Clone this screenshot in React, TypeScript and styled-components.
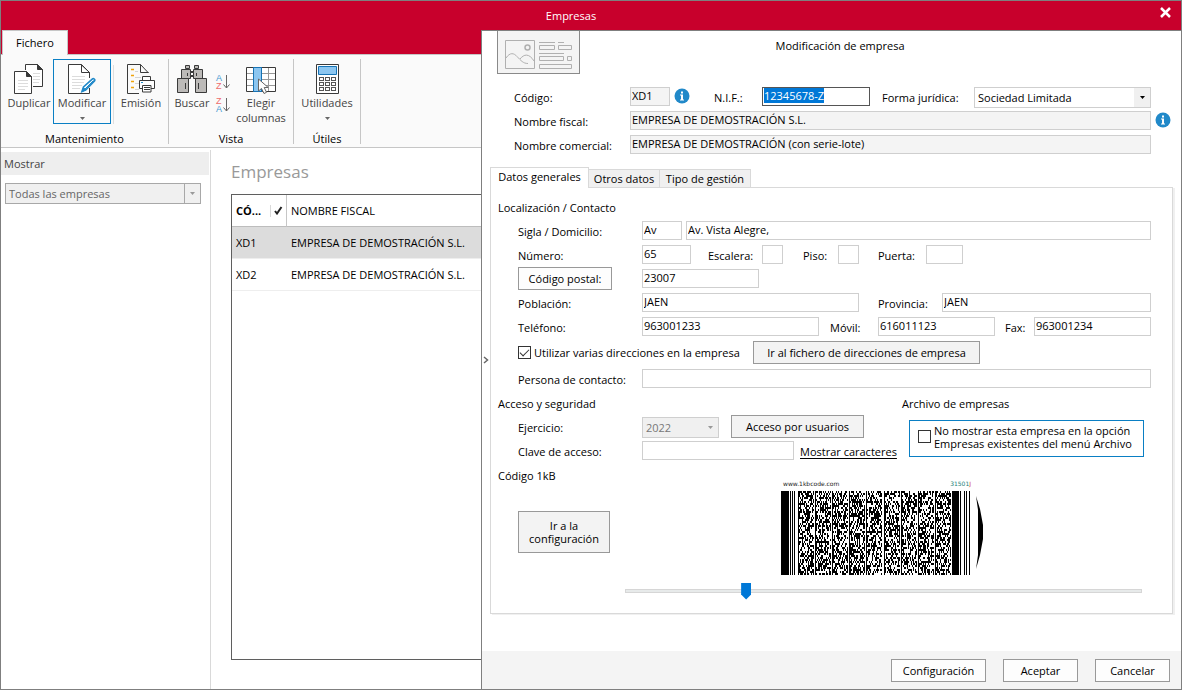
import React, { useEffect, useRef } from "react";
import styled, { createGlobalStyle, css } from "styled-components";

const color = {
  brand: "#c8002c",
  frame: "#7f7f7f",
  ribbon: "#fafafa",
  line: "#c6c6c6",
  field: "#cfcfcf",
  soft: "#d9d9d9",
  readOnly: "#f4f4f4",
  accent: "#0a7fc4",
  info: "#2189c9",
  select: "#0078d7",
};

const GlobalStyle = createGlobalStyle`
  *, *::before, *::after { box-sizing: border-box; }
  body { margin: 0; background: #fff; }
  body, button, input, select {
    font-family: "Open Sans", "Noto Sans", sans-serif;
    font-size: 11px;
    line-height: 15px;
    color: #000;
  }
  button, input, select { margin: 0; border-radius: 0; }
`;

/* ---------- window ---------- */

const Window = styled.div`
  display: flex;
  flex-direction: column;
  min-height: 100vh;
  border: 1px solid ${color.frame};
`;

const TitleBar = styled.header`
  display: flex;
  height: 29px;
  background: ${color.brand};
  color: #fff;
`;

const WindowTitle = styled.h1`
  flex: 1;
  margin: 0;
  font-size: 11px;
  font-weight: 400;
  line-height: 29px;
  text-align: center;
`;

const CloseButton = styled.button`
  display: flex;
  align-items: flex-start;
  justify-content: flex-end;
  width: 40px;
  padding: 6px 10px 0 0;
  border: 0;
  background: none;
`;

const Workspace = styled.div`
  display: flex;
  flex: 1;
`;

const Browser = styled.div`
  display: flex;
  flex-direction: column;
  flex: 0 1 480px;
  min-width: 0;
  overflow: hidden;
`;

/* ---------- ribbon ---------- */

const RibbonTabs = styled.nav`
  display: flex;
  height: 24px;
  padding-left: 1px;
  background: ${color.brand};
`;

const RibbonTab = styled.button`
  width: 66px;
  height: 25px;
  padding: 0 0 2px;
  border: 1px solid ${color.line};
  border-bottom: 0;
  background: ${color.ribbon};
  position: relative;
`;

const RibbonBar = styled.div`
  display: flex;
  height: 94px;
  padding-top: 4px;
  border-top: 1px solid ${color.line};
  border-bottom: 1px solid ${color.line};
  background: ${color.ribbon};
`;

const RibbonGroup = styled.section<{ $width: number }>`
  display: flex;
  flex-direction: column;
  flex: none;
  width: ${(p) => p.$width}px;
  height: 85px;
  border-right: 1px solid ${color.line};
`;

const RibbonItems = styled.div<{ $inset?: number }>`
  display: flex;
  flex: none;
  height: 72px;
  padding-left: ${(p) => p.$inset ?? 0}px;
`;

const GroupName = styled.h2`
  margin: 0;
  font-size: 11px;
  font-weight: 400;
  line-height: 16px;
  text-align: center;
`;

const RibbonButton = styled.button<{ $width: number; $active?: boolean }>`
  display: flex;
  flex-direction: column;
  align-items: center;
  flex: none;
  width: ${(p) => p.$width}px;
  height: 65px;
  padding: 4px 0 0;
  border: 1px solid ${(p) => (p.$active ? color.accent : "transparent")};
  background: none;
  color: #444;
  white-space: nowrap;

  svg { flex: none; }
  span { margin-top: 1px; }
  span + svg { margin-top: 7px; }
`;

const RibbonRule = styled.div`
  width: 1px;
  height: 59px;
  margin: 6px 0 0 2px;
  background: #dedede;
`;

const SortStack = styled.div`
  display: flex;
  flex-direction: column;
  gap: 7px;
  padding-top: 15px;
`;

const SortButton = styled.button`
  display: block;
  width: 16px;
  height: 16px;
  padding: 0;
  border: 0;
  background: none;

  svg { display: block; }
`;

/* ---------- left side ---------- */

const Lower = styled.div`
  display: flex;
  flex: 1;
`;

const Sidebar = styled.aside`
  flex: none;
  width: 210px;
  margin-top: 2px;
  padding-top: 2px;
  border-right: 1px solid ${color.soft};
`;

const SidebarTitle = styled.h2`
  width: 208px;
  margin: 0 0 8px;
  padding-left: 3px;
  background: #eee;
  color: #444;
  font-size: 11px;
  font-weight: 400;
  line-height: 23px;
`;

const ListArea = styled.main`
  display: flex;
  flex-direction: column;
  flex: 1;
  min-width: 0;
  padding: 12px 0 29px 20px;
`;

const ListTitle = styled.h2`
  margin: 0 0 10px;
  color: #999;
  font-size: 17px;
  font-weight: 400;
  line-height: 24px;
`;

const TableFrame = styled.div`
  flex: 1;
  overflow: hidden;
  border: 1px solid #5f5f5f;
  border-right: 0;
`;

const Table = styled.table`
  width: 100%;
  table-layout: fixed;
  border-collapse: separate;
  border-spacing: 0;
  white-space: nowrap;

  th, td {
    height: 32px;
    padding: 0 0 0 4px;
    border-bottom: 1px solid #eee;
    text-align: left;
    font-weight: 400;
  }
  th { border-bottom-color: #bdbdbd; }
  th:first-child { font-weight: 700; }
  th:nth-child(2) { padding: 0; border-right: 1px solid ${color.line}; }
`;

const TickHead = styled.span`
  display: flex;
  align-items: center;
  justify-content: center;
  height: 12px;
  border-left: 1px solid ${color.soft};
`;

const Row = styled.tr<{ $selected?: boolean }>`
  background: ${(p) => (p.$selected ? "#dcdcdc" : "#fff")};
`;

/* ---------- dialog ---------- */

const Dialog = styled.section`
  display: grid;
  grid-template-columns: 8px minmax(0, 1fr);
  grid-template-rows: 1fr auto;
  flex: 1;
  min-width: 0;
  border-top: 1px solid ${color.frame};
  border-left: 1px solid ${color.frame};
  background: #fff;
`;

const Collapse = styled.button`
  grid-area: 1 / 1 / 3 / 2;
  align-self: center;
  z-index: 1;
  padding: 0;
  border: 0;
  background: none;

  svg { display: block; }
`;

const DialogBody = styled.div`
  grid-area: 1 / 2;
  min-width: 0;
`;

const DialogHead = styled.div`
  display: flex;
  padding-left: 7px;
`;

const LayoutButton = styled.button`
  width: 83px;
  height: 43px;
  padding: 0;
  border: 1px solid #8a8a8a;
  border-top: 0;
  background: ${color.readOnly};

  svg { display: block; margin: 0 auto; }
`;

const DialogTitle = styled.h2`
  flex: 1;
  margin: 0 81px 0 0;
  font-size: 11px;
  font-weight: 400;
  line-height: 30px;
  text-align: center;
`;

const IdentityForm = styled.div`
  padding: 13px 0 8px 24px;
`;

const Line = styled.div<{ $tall?: boolean }>`
  display: flex;
  align-items: center;
  height: ${(p) => (p.$tall ? 23 : 19)}px;
  margin-bottom: 5px;
`;

const Label = styled.label<{ $width: number; $gap?: number }>`
  flex: none;
  width: ${(p) => p.$width}px;
  margin-left: ${(p) => p.$gap ?? 0}px;
  padding-top: 2px;
  white-space: nowrap;
`;

const TextBox = styled.input<{ $width?: number; $grow?: boolean; $strong?: boolean; $gap?: number }>`
  flex: ${(p) => (p.$width ? `${p.$grow ? p.$width : 0} 1 ${p.$width}px` : "1 1 0")};
  width: ${(p) => p.$width ?? 0}px;
  min-width: 0;
  height: 19px;
  margin-left: ${(p) => p.$gap ?? 0}px;
  padding: 0 1px 2px;
  border: 1px solid ${(p) => (p.$strong ? "#555" : color.field)};
  background: ${(p) => (p.readOnly ? color.readOnly : "#fff")};
  outline: 0;

  &::selection { background: ${color.select}; color: #fff; }
`;

const SideSlot = styled.div`
  flex: none;
  width: 30px;
  padding-left: 4px;
`;

const InfoButton = styled.button<{ $gap?: number }>`
  display: block;
  flex: none;
  width: 16px;
  height: 18px;
  margin-left: ${(p) => p.$gap ?? 0}px;
  padding: 0 0 2px;
  border: 0;
  background: none;

  svg { display: block; }
`;

const DropFrame = styled.div<{ $width?: number }>`
  display: grid;
  align-self: flex-start;
  flex: ${(p) => (p.$width ? `0 0 ${p.$width}px` : "1 1 0")};
  min-width: 0;
  height: 21px;

  > * { grid-area: 1 / 1; }
`;

const dropTones = {
  plain: css`border-color: ${color.field}; background: #fff; color: #000;`,
  muted: css`border-color: ${color.field}; background: #f0f0f0; color: #777;`,
  framed: css`border-color: #a8a8a8; background: #f0f0f0; color: #666;`,
};

type Tone = keyof typeof dropTones;

const Drop = styled.select<{ $tone: Tone }>`
  appearance: none;
  width: 100%;
  height: 21px;
  padding: 0 0 0 3px;
  border: 1px solid;
  outline: 0;
  ${(p) => dropTones[p.$tone]}

  &:disabled { opacity: 1; }
`;

const DropArrow = styled.span<{ $tone: Tone }>`
  display: flex;
  align-items: center;
  justify-content: center;
  justify-self: end;
  width: 16px;
  height: 19px;
  margin: 1px 1px 0 0;
  background: #f0f0f0;
  border-left: 1px solid ${(p) => (p.$tone === "framed" ? "#a8a8a8" : "#f0f0f0")};
  pointer-events: none;
`;

const SidebarFilter = styled.div`
  display: flex;
  width: 200px;
  padding-left: 4px;
`;

const Tabs = styled.div`
  display: flex;
  align-items: flex-end;
  height: 20px;
`;

const Tab = styled.button<{ $width: number; $active?: boolean }>`
  width: ${(p) => p.$width}px;
  height: ${(p) => (p.$active ? 21 : 18)}px;
  margin-bottom: ${(p) => (p.$active ? -1 : 0)}px;
  padding: ${(p) => (p.$active ? "0 0 3px" : "0")};
  border: 1px solid ${color.soft};
  border-bottom: 0;
  border-left-width: ${(p) => (p.$active ? 1 : 0)}px;
  background: ${(p) => (p.$active ? "#fff" : "#f0f0f0")};
  white-space: nowrap;
  z-index: ${(p) => (p.$active ? 1 : 0)};
`;

const Panel = styled.div`
  margin-right: 8px;
  padding: 9px 21px 14px 7px;
  border: 1px solid ${color.soft};
  box-shadow: 2px 1px 0 #f0f0f0;
`;

const SectionTitle = styled.h3`
  height: 24px;
  margin: 0;
  font-size: 11px;
  font-weight: 400;
  line-height: 22px;
`;

const Indent = styled.div`
  padding-left: 20px;
`;

const PushButton = styled.button<{ $width: number; $height?: number; $light?: boolean; $gap?: number }>`
  flex: none;
  width: ${(p) => p.$width}px;
  height: ${(p) => p.$height ?? 23}px;
  margin-left: ${(p) => p.$gap ?? 0}px;
  padding: 0;
  border: 1px solid #999;
  background: ${(p) => (p.$light ? "#fdfdfd" : "#f3f3f3")};
  line-height: 13px;
`;

const PostalSlot = styled.div`
  display: flex;
  flex: none;
  width: 124px;
`;

const Tick = styled.input`
  appearance: none;
  display: grid;
  place-items: center;
  flex: none;
  width: 13px;
  height: 13px;
  border: 1px solid #333;
  background: #fff;

  &:checked::before {
    content: "";
    width: 9px;
    height: 5px;
    margin-bottom: 3px;
    border: solid #333;
    border-width: 0 0 1px 1px;
    transform: rotate(-45deg);
  }
`;

const TickLabel = styled.label<{ $width?: number }>`
  display: flex;
  align-items: center;
  gap: 3px;
  flex: none;
  width: ${(p) => (p.$width ? `${p.$width}px` : "auto")};
  line-height: 13px;
  white-space: nowrap;
`;

const Columns = styled.div`
  display: flex;
  height: 72px;
`;

const AccessColumn = styled.div`
  flex: 1;
  min-width: 0;
`;

const ArchiveColumn = styled.div`
  flex: none;
  width: 249px;
`;

const ArchiveBox = styled.div`
  display: flex;
  align-items: center;
  height: 37px;
  margin: 3px 7px 0;
  padding: 0 0 4px 8px;
  border: 1px solid ${color.accent};
`;

const RevealLink = styled.a`
  margin-left: 6px;
  padding-top: 2px;
  color: #000;
  text-underline-offset: 2px;
`;

const CodeSection = styled.div`
  display: flex;
`;

const CodeActions = styled.div`
  flex: none;
  width: 127px;

  ${PushButton} { margin: 22px 0 0 20px; }
`;

const CodePreview = styled.div`
  display: flex;
  flex-direction: column;
  align-items: center;
  flex: 1;
  margin-right: 9px;
  padding-top: 12px;
`;

const CodeFigure = styled.figure`
  width: 205px;
  margin: 0;
  padding-right: 2px;

  svg { display: block; }
`;

const CodeCaption = styled.figcaption`
  display: flex;
  justify-content: space-between;
  height: 14px;
  padding: 0 13px 0 2px;
  color: #222;
  font-family: "DejaVu Sans", sans-serif;
  font-size: 6px;
  line-height: 14px;

  span { color: #1d7f78; }
  em { color: #d0342c; font-style: normal; }
`;

const Slider = styled.input`
  appearance: none;
  width: 100%;
  height: 17px;
  margin: 7px 0 0;
  background: none;
  outline: 0;

  &::-webkit-slider-runnable-track {
    height: 4px;
    border: 1px solid #d6d6d6;
    background: #e7eaea;
  }
  &::-webkit-slider-thumb {
    appearance: none;
    width: 10px;
    height: 17px;
    margin-top: -7px;
    background: ${color.select};
    clip-path: polygon(0 0, 100% 0, 100% 70%, 50% 100%, 0 70%);
  }
`;

const Footer = styled.footer`
  grid-area: 2 / 1 / 3 / 3;
  display: flex;
  justify-content: flex-end;
  gap: 17px;
  height: 38px;
  padding: 8px 11px 0 0;
  background: #f4f4f4;
`;

/* ---------- drawings ---------- */

const Arrow = ({ fill = "#666" }: { fill?: string }) => (
  <svg width="5" height="3" viewBox="0 0 5 3" aria-hidden="true">
    <path d="M0 0h5L2.5 3z" fill={fill} />
  </svg>
);

const DuplicateIcon = () => (
  <svg width="30" height="30" viewBox="0 0 30 30" fill="none" stroke="#3a3a3a">
    <path d="M11.5 6V.5h12l5 5v17H19" fill="#fff" />
    <path d="M23.5.5v5h5z" fill="#3a3a3a" />
    <path d="M19 9.5h7M19 12.5h7M19 15.5h7M19 18.5h6" stroke="#dcdcdc" />
    <path d="M.5 7.5h12l5 5v17H.5z" fill="#fff" />
    <path d="M12.5 7.5v5h5z" fill="#3a3a3a" />
    <path d="M4 16.5h10M4 19.5h10M4 22.5h10M4 25.5h7" stroke="#dcdcdc" />
  </svg>
);

const EditIcon = () => (
  <svg width="28" height="30" viewBox="0 0 28 30" fill="none" stroke="#3a3a3a">
    <path d="M21.5 14V8.5l-8-8H.5v29h21V24" fill="#fff" />
    <path d="M13.5.5v8h8M13.5 1l8 7.5" />
    <path d="M4 12.5h13M4 15.5h13M4 18.5h12M4 21.5h10M4 24.5h8" stroke="#dcdcdc" />
    <path d="M14 27.5l1.5-4.5 9-8.2c1-.9 3 .9 2 2.1l-8.6 9z" fill="#fff" stroke="#2189c9" strokeWidth="1.6" />
    <path d="M14 27.5l1.5-4 2.3 2.5zM17 25l8.500-8.500" stroke="#2189c9" fill="#2189c9" />
  </svg>
);

const PrintIcon = () => (
  <svg width="29" height="30" viewBox="0 0 29 30" fill="none" stroke="#3a3a3a">
    <path d="M13.5.5H.5v29H12M13.5.5l8 8.5" />
    <path d="M13.500.5v8h8" />
    <path d="M4 5.500h3M4 11.5h3M4 17.5h3M4 23.5h3" stroke="#f0a30a" strokeWidth="1.5" />
    <path d="M8 7.5h3M8 13.5h6M8 19.5h4M8 25.5h4" stroke="#d4d4d4" />
    <path d="M15.5 16.5v-4h8v4" fill="#fff" />
    <path d="M12.5 16.5h15v8h-15z" fill="#fff" />
    <path d="M15.5 21.5H24V28h-8.500zM17 23.5h6M17 25.5h6" fill="#fff" />
    <path d="M14 18.5h2" stroke="#2189c9" />
  </svg>
);

const SearchIcon = () => (
  <svg width="30" height="30" viewBox="0 0 30 30" fill="#bcbab8" stroke="#3a3a3a">
    <path d="M8.5 1.5h4v3h-4zM17.5 1.5h4v3h-4zM12.5 7.5h5v5h-5z" />
    <path d="M4.5 5.500h9v9h-9zM16.5 5.5h9v9h-9z" />
    <path d="M13.5 8.500h3v3h-3z" fill="#fff" />
    <path d="M.5 14.5h11v14H.5zM18.5 14.5h11v14h-11z" />
    <path d="M10.5 9v3M19.5 9v3M8.5 19v6M21.5 19v6" />
  </svg>
);

const SortIcon = ({ letters }: { letters: [string, string] }) => (
  <svg width="16" height="16" viewBox="0 0 16 16" fontFamily="Liberation Sans, sans-serif" fontSize="9">
    {letters.map((letter, i) => (
      <text key={letter} x="1" y={7 + i * 8} fill={letter === "A" ? "#3e97d1" : "#ee6a6a"}>
        {letter}
      </text>
    ))}
    <path d="M11.5 1v13M8.5 10.5l3 3.5 3-3.5" fill="none" stroke="#666" />
  </svg>
);

const ColumnsIcon = () => (
  <svg width="30" height="30" viewBox="0 0 30 30" fill="none">
    <path d="M.5 3.5h29v24H.5z" fill="#fff" />
    <path d="M0 9.5h30M0 15.5h30M0 21.5h30M15.5 3v24M22.5 3v24" stroke="#999" />
    <path d="M.5 3.5h29v24H.5z" stroke="#3a3a3a" />
    <path d="M7.5 3.5h8v24h-8z" fill="#8cc6f0" stroke="#1673b5" />
    <path d="M12.5 15v12l3-2.5 2.5 5 2.5-1.2-2.3-4.8h4z" fill="#fff" stroke="#666" />
  </svg>
);

const CalculatorIcon = () => (
  <svg width="23" height="30" viewBox="0 0 23 30" fill="none">
    <path d="M.5.5h22v29H.5z" fill="#fff" stroke="#3a3a3a" />
    <path d="M2.5 2.5h18v8h-18z" fill="#8cc6f0" stroke="#1673b5" />
    {[13.5, 18.5, 23.5].map((y) =>
      [3.5, 9.5, 15.5].map((x) => <rect key={`${x}-${y}`} x={x} y={y} width="4" height="3" stroke="#555" />)
    )}
  </svg>
);

const LayoutIcon = () => (
  <svg width="67" height="36" viewBox="0 0 67 36" fill="none" stroke="#b0b0b0">
    <path d="M.5 6.5h29v28H.5z" />
    <circle cx="22.5" cy="13.5" r="2.5" strokeWidth="1.5" />
    <path d="M1 24c4-6 8-5 11-1.5 4 4 6 7 11 7M15 25c4-5 9-6 14 2" />
    <path d="M34 8.5h16M53 8.5h6M34.5 11.5h15v4h-15zM53.5 11.5h13v4h-13zM34 19.5h25M34.5 22.5h24v4h-24zM62.5 22.5h4v4h-4zM34.5 30.5h32v4h-32z" />
  </svg>
);

const InfoIcon = () => (
  <svg width="16" height="16" viewBox="0 0 16 16">
    <circle cx="8" cy="8" r="7.5" fill={color.info} />
    <path d="M7 3.5h2v2H7zM6 6.5h3v5h1v1H6v-1h1v-4H6z" fill="#fff" />
  </svg>
);

/* Seeded generator, so that the code keeps one fixed pattern. */
const noise = (seed: number) => () => {
  seed = (seed + 0x6d2b79f5) | 0;
  let t = Math.imul(seed ^ (seed >>> 15), 1 | seed);
  t = (t + Math.imul(t ^ (t >>> 7), 61 | t)) ^ t;
  return ((t ^ (t >>> 14)) >>> 0) / 4294967296;
};

const buildCode = () => {
  const next = noise(31501);
  const starts = [17, 34, 51, 68, 85, 103, 120, 137, 154];
  let d = "M0 0h8v84h-8zM9 0h1v84h-1zM11 0h1v84h-1zM13 0h1v84h-1z";
  d += "M171 0h7v84h-7zM179 0h1v84h-1zM183 0h1v84h-1zM185 0h1v84h-1zM188 0h1v84h-1z";
  starts.forEach((x) => {
    d += `M${x} 0h1v84h-1z`;
    for (let y = 0; y < 84; y += 2) {
      for (let dx = 1; dx < 16; dx += 1) {
        if (next() < 0.52) d += `M${x + dx} ${y}h1v2h-1z`;
      }
    }
  });
  return d;
};

const codePath = buildCode();

const CodeDrawing = () => (
  <svg width="203" height="84" viewBox="0 0 203 84" role="img" aria-label="Código 1kB">
    <path d={codePath} shapeRendering="crispEdges" />
    <path d="M195 5l4 13 3 16v14l-3 16-4 14 2-14V19z" />
  </svg>
);

/* ---------- composed parts ---------- */

type DropDownProps = { id: string; value: string; tone: Tone; width?: number; disabled?: boolean; label?: string };

const DropDown = ({ id, value, tone, width, disabled, label }: DropDownProps) => (
  <DropFrame $width={width}>
    <Drop id={id} $tone={tone} disabled={disabled} aria-label={label} defaultValue={value}>
      <option>{value}</option>
    </Drop>
    <DropArrow $tone={tone}>
      <Arrow fill={tone === "plain" ? "#000" : "#999"} />
    </DropArrow>
  </DropFrame>
);

type FieldProps = {
  id: string;
  label: string;
  labelWidth: number;
  gap?: number;
  value?: string;
  width?: number;
  grow?: boolean;
  readOnly?: boolean;
};

const Field = ({ id, label, labelWidth, gap, value = "", width, grow, readOnly }: FieldProps) => (
  <>
    <Label htmlFor={id} $width={labelWidth} $gap={gap}>{label}</Label>
    <TextBox id={id} defaultValue={value} $width={width} $grow={grow} readOnly={readOnly} />
  </>
);

const Info = ({ gap }: { gap?: number }) => (
  <InfoButton $gap={gap} aria-label="Información"><InfoIcon /></InfoButton>
);

const Ribbon = () => (
  <>
    <RibbonTabs>
      <RibbonTab>Fichero</RibbonTab>
    </RibbonTabs>
    <RibbonBar>
      <RibbonGroup $width={168}>
        <RibbonItems $inset={4}>
          <RibbonButton $width={48}><DuplicateIcon /><span>Duplicar</span></RibbonButton>
          <RibbonButton $width={58} $active><EditIcon /><span>Modificar</span><Arrow /></RibbonButton>
          <RibbonRule />
          <RibbonButton $width={54}><PrintIcon /><span>Emisión</span></RibbonButton>
        </RibbonItems>
        <GroupName>Mantenimiento</GroupName>
      </RibbonGroup>
      <RibbonGroup $width={125}>
        <RibbonItems>
          <RibbonButton $width={46}><SearchIcon /><span>Buscar</span></RibbonButton>
          <SortStack>
            <SortButton aria-label="Orden ascendente"><SortIcon letters={["A", "Z"]} /></SortButton>
            <SortButton aria-label="Orden descendente"><SortIcon letters={["Z", "A"]} /></SortButton>
          </SortStack>
          <RibbonButton $width={60}><ColumnsIcon /><span>Elegir<br />columnas</span></RibbonButton>
        </RibbonItems>
        <GroupName>Vista</GroupName>
      </RibbonGroup>
      <RibbonGroup $width={67}>
        <RibbonItems>
          <RibbonButton $width={66}><CalculatorIcon /><span>Utilidades</span><Arrow /></RibbonButton>
        </RibbonItems>
        <GroupName>Útiles</GroupName>
      </RibbonGroup>
    </RibbonBar>
  </>
);

const companies = [
  { code: "XD1", name: "EMPRESA DE DEMOSTRACIÓN S.L.", selected: true },
  { code: "XD2", name: "EMPRESA DE DEMOSTRACIÓN S.L.", selected: false },
];

const CompanyList = () => (
  <Lower>
    <Sidebar>
      <SidebarTitle>Mostrar</SidebarTitle>
      <SidebarFilter>
        <DropDown id="filtro" label="Mostrar" value="Todas las empresas" tone="framed" disabled />
      </SidebarFilter>
    </Sidebar>
    <ListArea>
      <ListTitle>Empresas</ListTitle>
      <TableFrame>
        <Table>
          <colgroup>
            <col width="38" />
            <col width="17" />
            <col />
          </colgroup>
          <thead>
            <tr>
              <th>CÓ...</th>
              <th>
                <TickHead>
                  <svg width="9" height="9" viewBox="0 0 9 9" fill="none" stroke="#222" strokeWidth="2">
                    <path d="M1 5l2 2.5L7.5 1" />
                  </svg>
                </TickHead>
              </th>
              <th>NOMBRE FISCAL</th>
            </tr>
          </thead>
          <tbody>
            {companies.map((c) => (
              <Row key={c.code} $selected={c.selected}>
                <td>{c.code}</td>
                <td />
                <td>{c.name}</td>
              </Row>
            ))}
          </tbody>
        </Table>
      </TableFrame>
    </ListArea>
  </Lower>
);

const Identity = () => {
  const taxId = useRef<HTMLInputElement>(null);
  useEffect(() => {
    taxId.current?.focus();
    taxId.current?.select();
  }, []);

  return (
    <IdentityForm>
      <Line>
        <Field id="codigo" label="Código:" labelWidth={116} value="XD1" width={40} readOnly />
        <Info gap={4} />
        <Label htmlFor="nif" $width={48} $gap={24}>N.I.F.:</Label>
        <TextBox id="nif" ref={taxId} defaultValue="12345678-Z" $width={108} $strong />
        <Label htmlFor="forma" $width={92} $gap={12}>Forma jurídica:</Label>
        <DropDown id="forma" value="Sociedad Limitada" tone="plain" />
        <SideSlot />
      </Line>
      <Line>
        <Field id="fiscal" label="Nombre fiscal:" labelWidth={116} value="EMPRESA DE DEMOSTRACIÓN S.L." readOnly />
        <SideSlot><Info /></SideSlot>
      </Line>
      <Line>
        <Field
          id="comercial"
          label="Nombre comercial:"
          labelWidth={116}
          value="EMPRESA DE DEMOSTRACIÓN (con serie-lote)"
          readOnly
        />
        <SideSlot />
      </Line>
    </IdentityForm>
  );
};

const Address = () => (
  <>
    <SectionTitle>Localización / Contacto</SectionTitle>
    <Indent>
      <Line>
        <Field id="sigla" label="Sigla / Domicilio:" labelWidth={124} value="Av" width={40} />
        <TextBox aria-label="Domicilio" defaultValue="Av. Vista Alegre," $gap={4} />
      </Line>
      <Line>
        <Field id="numero" label="Número:" labelWidth={124} value="65" width={49} />
        <Field id="escalera" label="Escalera:" labelWidth={54} gap={17} width={21} />
        <Field id="piso" label="Piso:" labelWidth={35} gap={20} width={21} />
        <Field id="puerta" label="Puerta:" labelWidth={48} gap={19} width={37} />
      </Line>
      <Line>
        <PostalSlot><PushButton $width={94} $light>Código postal:</PushButton></PostalSlot>
        <TextBox aria-label="Código postal" defaultValue="23007" $width={117} />
      </Line>
      <Line>
        <Field id="poblacion" label="Población:" labelWidth={124} value="JAEN" width={217} grow />
        <Field id="provincia" label="Provincia:" labelWidth={64} gap={19} value="JAEN" width={209} grow />
      </Line>
      <Line>
        <Field id="telefono" label="Teléfono:" labelWidth={124} value="963001233" width={177} grow />
        <Field id="movil" label="Móvil:" labelWidth={48} gap={11} value="616011123" width={117} grow />
        <Field id="fax" label="Fax:" labelWidth={29} gap={10} value="963001234" width={117} grow />
      </Line>
      <Line $tall>
        <TickLabel $width={235}>
          <Tick type="checkbox" defaultChecked />
          Utilizar varias direcciones en la empresa
        </TickLabel>
        <PushButton $width={227}>Ir al fichero de direcciones de empresa</PushButton>
      </Line>
      <Line>
        <Field id="contacto" label="Persona de contacto:" labelWidth={124} />
      </Line>
    </Indent>
  </>
);

const Access = () => (
  <Columns>
    <AccessColumn>
      <SectionTitle>Acceso y seguridad</SectionTitle>
      <Indent>
        <Line>
          <Label htmlFor="ejercicio" $width={124}>Ejercicio:</Label>
          <DropDown id="ejercicio" value="2022" tone="muted" width={77} disabled />
          <PushButton $width={133} $gap={12}>Acceso por usuarios</PushButton>
        </Line>
        <Line>
          <Field id="clave" label="Clave de acceso:" labelWidth={124} width={152} />
          <RevealLink href="#clave">Mostrar caracteres</RevealLink>
        </Line>
      </Indent>
    </AccessColumn>
    <ArchiveColumn>
      <SectionTitle>Archivo de empresas</SectionTitle>
      <ArchiveBox>
        <TickLabel>
          <Tick type="checkbox" />
          <span>No mostrar esta empresa en la opción<br />Empresas existentes del menú Archivo</span>
        </TickLabel>
      </ArchiveBox>
    </ArchiveColumn>
  </Columns>
);

const Code = () => (
  <CodeSection>
    <CodeActions>
      <SectionTitle>Código 1kB</SectionTitle>
      <PushButton $width={92} $height={42}>Ir a la<br />configuración</PushButton>
    </CodeActions>
    <CodePreview>
      <CodeFigure>
        <CodeCaption>
          www.1kbcode.com
          <span>31501<em>J</em></span>
        </CodeCaption>
        <CodeDrawing />
      </CodeFigure>
      <Slider type="range" min="0" max="1000" defaultValue="228" aria-label="Tamaño del código" />
    </CodePreview>
  </CodeSection>
);

export default function App() {
  return (
    <>
      <GlobalStyle />
      <Window>
        <TitleBar>
          <WindowTitle>Empresas</WindowTitle>
          <CloseButton aria-label="Cerrar">
            <svg width="11" height="11" viewBox="0 0 11 11" stroke="#fff" strokeWidth="2.5">
              <path d="M1 1l9 9M10 1l-9 9" />
            </svg>
          </CloseButton>
        </TitleBar>
        <Workspace>
          <Browser>
            <Ribbon />
            <CompanyList />
          </Browser>
          <Dialog role="dialog" aria-label="Modificación de empresa">
            <Collapse aria-label="Contraer">
              <svg width="8" height="8" viewBox="0 0 8 8" fill="none" stroke="#666" strokeWidth="1.5">
                <path d="M2 1l3.5 3L2 7" />
              </svg>
            </Collapse>
            <DialogBody>
              <DialogHead>
                <LayoutButton aria-label="Diseño"><LayoutIcon /></LayoutButton>
                <DialogTitle>Modificación de empresa</DialogTitle>
              </DialogHead>
              <Identity />
              <Tabs>
                <Tab $width={99} $active>Datos generales</Tab>
                <Tab $width={71}>Otros datos</Tab>
                <Tab $width={91}>Tipo de gestión</Tab>
              </Tabs>
              <Panel>
                <Address />
                <Access />
                <Code />
              </Panel>
            </DialogBody>
            <Footer>
              <PushButton $width={95} $light>Configuración</PushButton>
              <PushButton $width={75} $light>Aceptar</PushButton>
              <PushButton $width={75} $light>Cancelar</PushButton>
            </Footer>
          </Dialog>
        </Workspace>
      </Window>
    </>
  );
}
